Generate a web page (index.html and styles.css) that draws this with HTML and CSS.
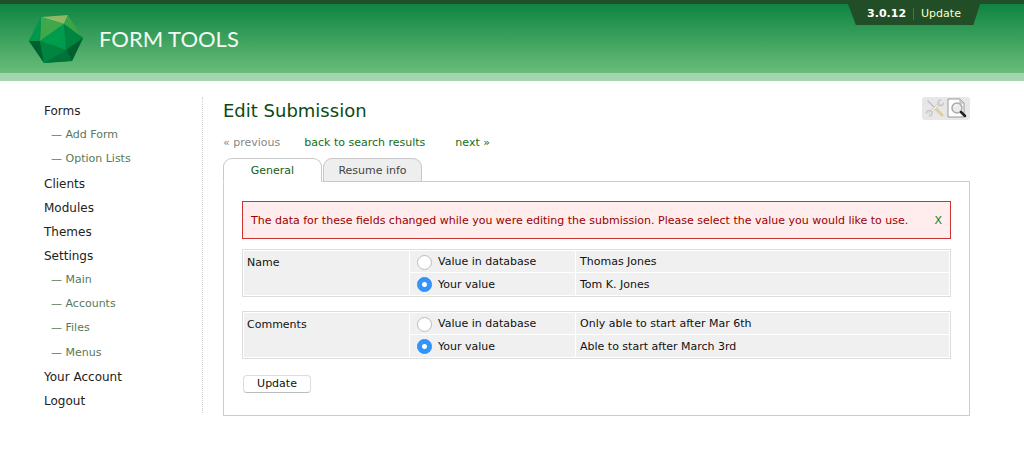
FILE: index.html
```
<!DOCTYPE html>
<html lang="en">
<head>
<meta charset="utf-8">
<title>Form Tools - Edit Submission</title>
<link rel="stylesheet" href="styles.css">
</head>
<body>
<header class="header">
  <a class="brand" href="#">
    <svg class="brand-mark" width="56" height="50" viewBox="0 0 56 50" aria-hidden="true">
      <path d="M13 3L40 1 55 24 44 47 16 49 1 27Z" fill="#008a43"/>
      <path d="M13 3L40 1 36 10Z" fill="#8fb967"/>
      <path d="M13 3L36 10 12 27Z" fill="#3fa84b"/>
      <path d="M40 1L55 24 36 10Z" fill="#3aa548"/>
      <path d="M13 3L12 27 1 27Z" fill="#00994b"/>
      <path d="M36 10L12 27 38 36Z" fill="#009c4d"/>
      <path d="M36 10L55 24 38 36Z" fill="#008541"/>
      <path d="M1 27L12 27 16 49Z" fill="#00602d"/>
      <path d="M12 27L38 36 16 49Z" fill="#008541"/>
      <path d="M38 36L44 47 16 49Z" fill="#007339"/>
      <path d="M55 24L44 47 38 36Z" fill="#005f2d"/>
    </svg>
    <span class="brand-name">FORM TOOLS</span>
  </a>
  <div class="version"><b>3.0.12</b><span class="version-sep"></span><a class="version-link" href="#">Update</a></div>
</header>
<div class="layout">
  <nav class="nav">
    <a class="nav-link" href="#">Forms</a>
    <a class="nav-link nav-sub" href="#">— Add Form</a>
    <a class="nav-link nav-sub" href="#">— Option Lists</a>
    <a class="nav-link" href="#">Clients</a>
    <a class="nav-link" href="#">Modules</a>
    <a class="nav-link" href="#">Themes</a>
    <a class="nav-link" href="#">Settings</a>
    <a class="nav-link nav-sub" href="#">— Main</a>
    <a class="nav-link nav-sub" href="#">— Accounts</a>
    <a class="nav-link nav-sub" href="#">— Files</a>
    <a class="nav-link nav-sub" href="#">— Menus</a>
    <a class="nav-link" href="#">Your Account</a>
    <a class="nav-link" href="#">Logout</a>
  </nav>
  <main class="main">
    <div class="title-row">
      <h1 class="title">Edit Submission</h1>
      <div class="tools">
        <a class="tool tool-off" href="#" aria-label="Edit form">
          <svg width="20" height="20" viewBox="0 0 20 20" fill="none" stroke-linecap="round">
            <path d="M3 3L11 11" stroke="#a9a9a9" stroke-width="1.5"/>
            <path d="M11 11L17 17" stroke="#dcc060" stroke-width="3"/>
            <path d="M5 15L14 6" stroke="#b0b0b0" stroke-width="2.6"/>
            <path d="M5 15L14 6" stroke="#fff" stroke-width="1.2"/>
            <path d="M16 2a2.8 2.8 0 1 0 2.500 3M1.500 15a2.800 2.800 0 1 1 3 3" stroke="#b5b5b5" stroke-width="1.500"/>
          </svg>
        </a>
        <a class="tool" href="#" aria-label="View submission">
          <svg width="20" height="20" viewBox="0 0 20 20">
            <path d="M1 1H13L17 5V19H1Z" fill="#fff" stroke="#999"/>
            <path d="M13 1V5H17Z" fill="#ddd" stroke="#aaa"/>
            <circle cx="10" cy="10" r="5" fill="#e8ecef" stroke="#aaa" stroke-width="1.5"/>
            <path d="M7 9Q8 7 10 7" fill="none" stroke="#fff"/>
            <path d="M14 14L18 18" stroke="#222" stroke-width="2.5" stroke-linecap="round"/>
          </svg>
        </a>
      </div>
    </div>
    <div class="pager">
      <span class="pager-off">« previous</span>
      <a class="pager-link" href="#">back to search results</a>
      <a class="pager-link" href="#">next »</a>
    </div>
    <div class="tabs">
      <a class="tab tab-active" href="#">General</a>
      <a class="tab" href="#">Resume info</a>
    </div>
    <form class="panel">
      <div class="alert">
        <span>The data for these fields changed while you were editing the submission. Please select the value you would like to use.</span>
        <a class="alert-close" href="#">X</a>
      </div>
      <table class="choices">
        <tr>
          <td class="col-field" rowspan="2">Name</td>
          <td class="col-source"><label class="choice"><input class="radio" type="radio" name="name">Value in database</label></td>
          <td>Thomas Jones</td>
        </tr>
        <tr>
          <td class="col-source"><label class="choice"><input class="radio" type="radio" name="name" checked>Your value</label></td>
          <td>Tom K. Jones</td>
        </tr>
      </table>
      <table class="choices">
        <tr>
          <td class="col-field" rowspan="2">Comments</td>
          <td class="col-source"><label class="choice"><input class="radio" type="radio" name="comments">Value in database</label></td>
          <td>Only able to start after Mar 6th</td>
        </tr>
        <tr>
          <td class="col-source"><label class="choice"><input class="radio" type="radio" name="comments" checked>Your value</label></td>
          <td>Able to start after March 3rd</td>
        </tr>
      </table>
      <button class="submit" type="button">Update</button>
    </form>
  </main>
</div>
</body>
</html>
```
FILE: styles.css
```
* { box-sizing: border-box; }

body {
  margin: 0;
  background: #fff;
  color: #222;
  font: 11px/16px Verdana, "DejaVu Sans", sans-serif;
}

a { text-decoration: none; }

.header {
  display: flex;
  justify-content: space-between;
  align-items: flex-start;
  height: 81px;
  padding: 0 44px 0 28px;
  border-top: 4px solid #214d27;
  border-bottom: 8px solid #a3d6ae;
  background: linear-gradient(#0f8443, #69bd78);
}

.brand {
  display: flex;
  align-items: center;
  gap: 15px;
  padding-top: 10px;
}

.brand-name {
  color: #f2f8f2;
  font: 22px/30px Lato, sans-serif;
}

.version {
  display: flex;
  justify-content: center;
  align-items: center;
  width: 132px;
  height: 21px;
  padding-bottom: 2px;
  background: #214d27;
  clip-path: polygon(0 0, 100% 0, 95% 100%, 6% 100%);
  color: #fff;
}

.version-sep {
  width: 1px;
  height: 12px;
  margin: 0 7px;
  background: #3f7a3f;
}

.version-link { color: #ffffc5; }

.layout {
  display: flex;
  padding: 16px 54px 0 44px;
}

.nav {
  display: grid;
  grid-auto-rows: 1fr;
  align-items: center;
  flex: 0 0 159px;
  margin: 0 20px 3px 0;
  padding-top: 2px;
  border-right: 1px dotted #ccc;
}

.nav-link {
  color: #222;
  font-size: 12px;
}

.nav-sub {
  padding-left: 7px;
  color: #56795a;
  font-size: 11px;
}

.main { flex: 1; }

.title-row {
  display: flex;
  justify-content: space-between;
  align-items: flex-start;
}

.title {
  margin: 0;
  color: #0d4a12;
  font-size: 18px;
  font-weight: 400;
  line-height: 28px;
}

.tools {
  display: flex;
  gap: 2px;
  padding: 1px 3px;
  border-radius: 3px;
  background: #e7e7e7;
}

.tool { height: 21px; }

.tool-off { opacity: 0.6; }

.pager {
  display: flex;
  padding: 10px 0 7px;
}

.pager-off {
  margin-right: 24px;
  color: #888;
}

.pager-link {
  margin-right: 30px;
  color: #136c16;
}

.tabs {
  display: flex;
  gap: 1px;
  margin-bottom: -1px;
}

.tab {
  width: 99px;
  height: 24px;
  border: 1px solid #c8c8c8;
  border-radius: 9px 9px 0 0;
  background: #eee;
  color: #444;
  line-height: 24px;
  text-align: center;
}

.tab-active {
  z-index: 1;
  border-bottom-color: #fff;
  background: #fff;
  color: #135d16;
}

.panel {
  padding: 19px 18px 22px;
  border: 1px solid #ccc;
}

.alert {
  display: flex;
  justify-content: space-between;
  align-items: center;
  height: 38px;
  margin-bottom: 10px;
  padding: 1px 8px 0;
  border: 1px solid #c33;
  background: #ffecec;
  color: #900;
}

.alert-close { color: #188018; }

.choices {
  width: 100%;
  margin-bottom: 14px;
  border: 1px solid #ddd;
  border-spacing: 1px;
  table-layout: fixed;
}

.choices td {
  height: 21px;
  padding: 1px 4px 0;
  background: #f0f0f0;
  color: #111;
  vertical-align: middle;
}

.choices tr:last-child td { height: 22px; }

.choices .col-field {
  width: 165px;
  padding: 4px 3px 3px;
  vertical-align: top;
}

.choices .col-source {
  width: 165px;
  padding-left: 7px;
}

.choice {
  display: flex;
  align-items: center;
  gap: 6px;
}

.radio {
  width: 15px;
  height: 15px;
  margin: 0;
  border: 1px solid #bbb;
  border-radius: 50%;
  appearance: none;
  background: #fff;
}

.radio:checked {
  border-color: #2488f5;
  background: radial-gradient(circle, #fff 2px, #3395fc 3px);
}

.submit {
  width: 68px;
  height: 18px;
  margin: 2px 0 0 1px;
  padding: 0;
  border: 1px solid #ddd;
  border-bottom-color: #bbb;
  border-radius: 4px;
  background: #fff;
  color: #111;
  font: inherit;
}
```
